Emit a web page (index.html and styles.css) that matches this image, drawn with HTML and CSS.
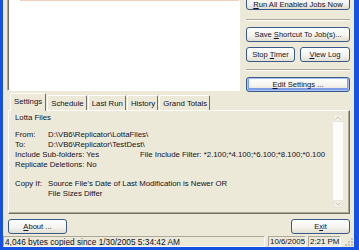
FILE: index.html
```html
<!DOCTYPE html>
<html>
<head>
<meta charset="utf-8">
<link rel="stylesheet" href="styles.css">
</head>
<body>
<div class="window">
  <div class="top">
    <div class="list"><div class="row"></div></div>
    <div class="actions">
      <button class="btn run"><span><u>R</u>un All Enabled Jobs Now</span></button>
      <div class="sep"></div>
      <button class="btn save"><span>Save <u>S</u>hortcut To Job(s)...</span></button>
      <div class="pair">
        <button class="btn stop"><span>Stop <u>T</u>imer</span></button>
        <button class="btn view"><span><u>V</u>iew Log</span></button>
      </div>
      <div class="sep sep2"></div>
      <button class="btn edit"><span><u>E</u>dit Settings ...</span></button>
    </div>
  </div>
  <div class="tabs">
    <div class="tab active">Settings</div>
    <div class="tab">Schedule</div>
    <div class="tab">Last Run</div>
    <div class="tab">History</div>
    <div class="tab">Grand Totals</div>
  </div>
  <div class="panel">
    <div class="content">
      <div class="title">Lotta Files</div>
      <div class="kv"><span>From:</span><span>D:\VB6\Replicator\LottaFiles\</span></div>
      <div class="kv"><span>To:</span><span>D:\VB6\Replicator\TestDest\</span></div>
      <div class="two"><span>Include Sub-folders: Yes</span><span>File Include Filter: *2.100;*4.100;*6.100;*8.100;*0.100</span></div>
      <div>Replicate Deletions: No</div>
      <div class="kv copy"><span>Copy If:</span><span>Source File's Date of Last Modification is Newer OR<br>File Sizes Differ</span></div>
    </div>
    <div class="scroll">
      <div class="arrow"><svg width="6" height="4" viewBox="0 0 6 4"><path d="M0.5 3.5 L3 1 L5.5 3.5" fill="none" stroke="#c9c5b8" stroke-width="1"/></svg></div>
      <div class="track"></div>
      <div class="arrow"><svg width="6" height="4" viewBox="0 0 6 4"><path d="M0.5 0.5 L3 3 L5.5 0.5" fill="none" stroke="#c9c5b8" stroke-width="1"/></svg></div>
    </div>
  </div>
  <div class="bottom">
    <button class="btn small"><span><u>A</u>bout ...</span></button>
    <button class="btn small"><span>E<u>x</u>it</span></button>
  </div>
  <div class="status">
    <div class="sp sp1">4,046 bytes copied since 1/30/2005 5:34:42 AM</div>
    <div class="sp sp2">10/6/2005</div>
    <div class="sp sp3">2:21 PM</div>
    <div class="grip"><svg width="11" height="11" viewBox="0 0 11 11"><g fill="#c4c0b2"><rect x="8" y="2" width="2" height="2"/><rect x="5" y="5" width="2" height="2"/><rect x="8" y="5" width="2" height="2"/><rect x="2" y="8" width="2" height="2"/><rect x="5" y="8" width="2" height="2"/><rect x="8" y="8" width="2" height="2"/></g></svg></div>
  </div>
</div>
</body>
</html>
```

FILE: styles.css
```css
* { box-sizing: border-box; }
body {
  margin: 0;
  font-family: "Liberation Sans", Arial, sans-serif;
  font-size: 7.8px;
  color: #12111f;
  overflow: hidden;
}
.window {
  width: 359px;
  height: 250px;
  background: #ECE9D8;
  border-left: 3px solid #1652df;
  border-right: 5px solid #1652df;
  border-bottom: 3px solid #1652df;
  display: flex;
  flex-direction: column;
  overflow: hidden;
}
.top {
  display: flex;
  margin-top: -6px;
  height: 98px;
  padding: 0 4px;
  gap: 6px;
  flex: none;
}
.list {
  width: 233px;
  height: 97px;
  background: #fff;
  border: 1px solid;
  border-color: #ACA899 #fff #fff #ACA899;
  box-shadow: inset 1px 1px 0 #716F64;
  padding-top: 5px;
}
.row {
  height: 1px;
  margin-left: 12px;
  background: #efd2bb;
}
.actions {
  width: 104px;
  display: flex;
  flex-direction: column;
}
.btn {
  height: 15px;
  border: 1px solid #3a5a8c;
  border-radius: 3px;
  background: linear-gradient(#ffffff, #f5f4ef 55%, #e2ded2);
  font: inherit;
  font-size: 7.6px;
  color: inherit;
  padding: 0;
  display: flex;
  align-items: center;
  justify-content: center;
  line-height: 1;
  flex: none;
}
.run { height: 16px; padding-top: 5px; }
.sep {
  height: 2px;
  border-top: 1px solid #ACA899;
  border-bottom: 1px solid #fff;
  margin: 9px 0 6px;
  flex: none;
}
.sep2 { margin: 7px 0 6px; }
.save { margin-bottom: 5px; }
.pair { display: flex; gap: 5px; }
.stop { width: 49px; }
.view { width: 50px; }
.edit { box-shadow: inset 0 0 0 1px #a9c2f0, inset 0 -1px 0 2px #7d9ee6; }
.tabs {
  display: flex;
  align-items: flex-end;
  height: 17px;
  margin-top: 1px;
  padding-left: 7px;
  flex: none;
  position: relative;
  z-index: 1;
}
.tab {
  height: 15px;
  padding: 0 2px 0 3px;
  border: 1px solid;
  border-bottom: none;
  border-color: #fff #716F64 transparent #fff;
  border-radius: 2px 2px 0 0;
  display: flex;
  align-items: center;
  margin-right: 1px;
}
.tab.active {
  height: 18px;
  margin-bottom: -1px;
  padding: 0 3px 2px 3px;
  background: #ECE9D8;
}
.panel {
  margin-left: 5px;
  width: 342px;
  height: 104px;
  border: 1px solid;
  border-color: #fff #716F64 #716F64 #fff;
  box-shadow: inset -1px -1px 0 #ACA899;
  display: flex;
  flex: none;
}
.content {
  flex: 1;
  padding: 2px 0 0 6px;
  line-height: 10px;
}
.title { margin-bottom: 7px; }
.kv { display: grid; grid-template-columns: 33px auto; }
.two { display: grid; grid-template-columns: 125px auto; }
.copy { margin-top: 9px; }
.scroll {
  width: 10px;
  margin: 3px 6px 5px 0;
  display: flex;
  flex-direction: column;
  background: #fdfdfb;
}
.arrow {
  height: 8px;
  background: #f1efe6;
  border: 1px solid #e6e3d8;
  display: flex;
  align-items: center;
  justify-content: center;
  flex: none;
}
.track { flex: 1; }
.bottom {
  display: flex;
  justify-content: space-between;
  margin: 5px 4px 0 5px;
  flex: none;
}
.small { width: 59px; }
.status {
  display: flex;
  margin-top: 2px;
  height: 11px;
  flex: none;
  font-size: 7.9px;
}
.sp {
  border: 1px solid;
  border-color: #ACA899 #fff #fff #ACA899;
  display: flex;
  align-items: center;
  padding-left: 1px;
  white-space: nowrap;
  overflow: hidden;
}
.sp1 { width: 262px; margin-right: 3px; font-size: 8.3px; }
.sp2 { width: 38px; margin-right: 2px; }
.sp3 { width: 33px; padding-left: 1px; }
.grip { flex: 1; display: flex; justify-content: flex-end; align-items: flex-end; }
```
